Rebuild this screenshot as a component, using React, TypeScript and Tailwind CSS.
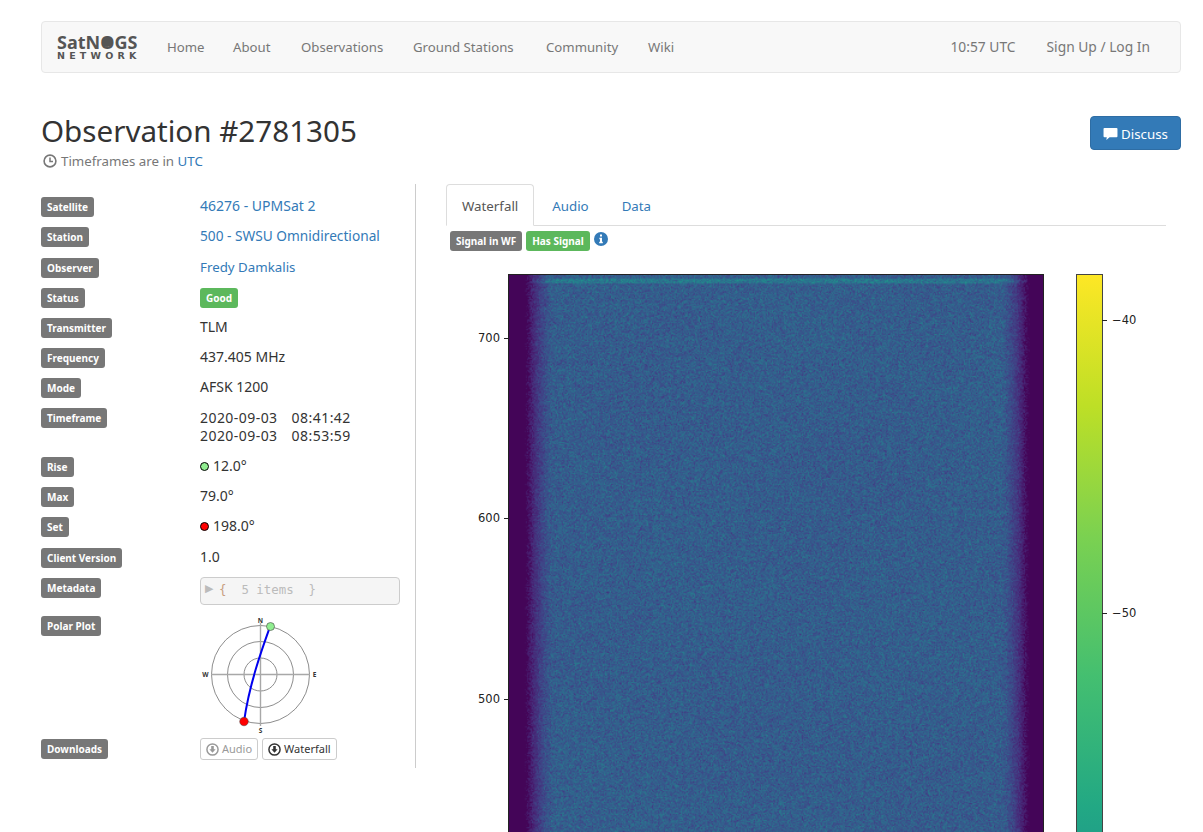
import { useEffect, useRef } from "react";

const font = { fontFamily: '"Noto Sans", sans-serif' };
const plotFont = { fontFamily: '"DejaVu Sans", sans-serif' };

const VIRIDIS: [number, number, number][] = [
  [68, 1, 84], [72, 35, 116], [64, 67, 135], [52, 94, 141], [41, 120, 142],
  [32, 144, 140], [34, 167, 132], [68, 190, 112], [121, 209, 81], [189, 222, 38], [253, 231, 36],
];

function viridis(t: number): [number, number, number] {
  const x = Math.max(0, Math.min(0.9999, t)) * 10;
  const i = Math.floor(x);
  const f = x - i;
  const a = VIRIDIS[i];
  const b = VIRIDIS[i + 1];
  return [a[0] + (b[0] - a[0]) * f, a[1] + (b[1] - a[1]) * f, a[2] + (b[2] - a[2]) * f];
}

function Waterfall() {
  const ref = useRef<HTMLCanvasElement>(null);
  useEffect(() => {
    const c = ref.current;
    if (!c) return;
    const ctx = c.getContext("2d");
    if (!ctx) return;
    const w = c.width;
    const h = c.height;
    const img = ctx.createImageData(w, h);
    let seed = 12345;
    const rnd = () => {
      seed = (seed * 1664525 + 1013904223) >>> 0;
      return seed / 4294967296;
    };
    for (let y = 0; y < h; y++) {
      for (let x = 0; x < w; x++) {
        const edge = Math.min(x, w - 1 - x + 2) + (rnd() - 0.5) * 6;
        const ramp = Math.max(0, Math.min(1, (edge - 15) / 20));
        const base = 0.012 + Math.pow(ramp, 0.7) * 0.285;
        const top = y > 2 && y < 7 && edge > 12 ? 0.1 * ramp : 0;
        const blotch = (Math.sin(x * 0.031 + y * 0.013) + Math.sin(x * 0.011 - y * 0.027)) * 0.003 * ramp;
        const n = (rnd() + rnd() + rnd() - 1.5) * 0.1 * ramp;
        const v = viridis(base + top + blotch + n);
        const p = (y * w + x) * 4;
        img.data[p] = v[0];
        img.data[p + 1] = v[1];
        img.data[p + 2] = v[2];
        img.data[p + 3] = 255;
      }
    }
    ctx.putImageData(img, 0, 0);
  }, []);
  return <canvas ref={ref} width={445} height={500} className="block h-[600px] w-[534px]" />;
}

function Label({ children }: { children: string }) {
  return (
    <span className="inline-block h-5 whitespace-nowrap rounded-[3px] bg-[#777777] px-[6px] text-[10px] font-bold leading-5 text-white">
      {children}
    </span>
  );
}

function Row({ label, h, children }: { label: string; h: string; children: React.ReactNode }) {
  return (
    <div className={`flex ${h}`}>
      <div className="w-[159px] shrink-0 pt-[1px] leading-none">
        <Label>{label}</Label>
      </div>
      <div className="text-[14px] leading-5 text-[#333333]">{children}</div>
    </div>
  );
}

function A({ children }: { children: string }) {
  return <span className="text-[#337ab7]">{children}</span>;
}

function DownloadIcon({ className }: { className: string }) {
  return (
    <svg viewBox="0 0 14 14" className={className}>
      <circle cx="7" cy="7" r="6" fill="none" stroke="currentColor" strokeWidth="1.6" />
      <path d="M5.6 3.2h2.8v3.4h2L7 10.6 3.6 6.6h2z" fill="currentColor" />
    </svg>
  );
}

function Polar() {
  return (
    <svg width="130" height="118" viewBox="0 0 130 118" className="block" style={font}>
      <g fill="none" stroke="#808080" strokeWidth="0.9">
        <circle cx="60.5" cy="59.5" r="49" />
        <circle cx="60.5" cy="59.5" r="33" />
        <circle cx="60.5" cy="59.5" r="16.5" />
      </g>
      <path d="M60.5 8v103M11 59.5h99" stroke="#a8a8a8" strokeWidth="1.4" />
      <path d="M70 11.7C62 34 49 70 44 106.7" fill="none" stroke="#0000ee" strokeWidth="2" />
      <circle cx="70.5" cy="11.5" r="4" fill="#90ee90" stroke="#444" strokeWidth="0.6" />
      <circle cx="44" cy="106.5" r="4.3" fill="#ff0000" stroke="#444" strokeWidth="0.5" />
      <g fontSize="6.5" fontWeight="700" fill="#333" textAnchor="middle">
        <text x="60.5" y="7.5">N</text>
        <text x="60.5" y="117.5">S</text>
        <text x="5.5" y="62">W</text>
        <text x="114.5" y="62">E</text>
      </g>
    </svg>
  );
}

function Tick({ y, label }: { y: number; label: string }) {
  return (
    <div className="absolute left-[-31px] flex items-center text-[11.5px] leading-none text-[#222222]" style={{ ...plotFont, top: y - 6 }}>
      <span className="w-[23px]">{label}</span>
      <span className="ml-[3px] h-px w-[5px] bg-[#222222]" />
    </div>
  );
}

function CTick({ y, label }: { y: number; label: string }) {
  return (
    <div className="absolute left-[25px] flex items-center text-[11.5px] leading-none text-[#222222]" style={{ ...plotFont, top: y - 6 }}>
      <span className="h-px w-[5px] bg-[#222222]" />
      <span className="ml-[5px]">{label}</span>
    </div>
  );
}

export default function App() {
  return (
    <div className="h-[832px] overflow-hidden bg-white text-[#333333]" style={font}>
      <div className="ml-[41px] w-[1140px] pt-[21px]">
        <nav className="flex h-[52px] items-center rounded border border-[#e7e7e7] bg-[#f8f8f8] pl-[15px] pr-[30px] text-[13.2px] text-[#777777]">
          <div className="flex w-[96px] flex-col text-[#555555]">
            <span className="whitespace-nowrap text-[18px] font-bold leading-[15px]">
              SatN
              <span className="relative inline-block">
                O
                <span className="absolute left-[2px] top-[2px] h-[10px] w-[10px] rounded-full bg-[#555555]" />
              </span>
              GS
            </span>
            <span className="mt-[2px] whitespace-nowrap text-[9.5px] font-bold leading-[8px] tracking-[4.2px]" style={plotFont}>NETWORK</span>
          </div>
          <div className="flex gap-[30px] whitespace-nowrap pl-[14px] pt-[2px]">
            <span className="w-[36px]">Home</span>
            <span className="w-[38px]">About</span>
            <span className="w-[82px]">Observations</span>
            <span className="w-[103px]">Ground Stations</span>
            <span className="w-[72px]">Community</span>
            <span>Wiki</span>
          </div>
          <div className="ml-auto flex gap-[31px] pt-[1px] text-[13.8px]">
            <span>10:57 UTC</span>
            <span>Sign Up / Log In</span>
          </div>
        </nav>

        <div className="mt-[40px] flex items-start justify-between">
          <div>
            <h1 className="text-[29.6px] font-normal leading-[36px] text-[#333333]">Observation #2781305</h1>
            <div className="ml-[2px] mt-[2px] flex items-center gap-[4px] text-[13.3px] leading-5 text-[#777777]">
              <svg viewBox="0 0 14 14" className="h-[14px] w-[14px]">
                <circle cx="7" cy="7" r="5.9" fill="none" stroke="currentColor" strokeWidth="1.6" />
                <path d="M7 3.6V7.4H10" fill="none" stroke="currentColor" strokeWidth="1.5" />
              </svg>
              <span>
                Timeframes are in <A>UTC</A>
              </span>
            </div>
          </div>
          <div className="mt-[3px] flex h-[34px] w-[91px] items-center justify-center gap-[3px] rounded border border-[#2e6da4] bg-[#337ab7] pt-[3px] text-[13.3px] text-white">
            <svg viewBox="0 0 16 14" className="mb-[2px] h-[13px] w-[15px]">
              <path d="M1.5 1h13a1 1 0 0 1 1 1v8a1 1 0 0 1-1 1H7l-3.5 3 .5-3H1.5a1 1 0 0 1-1-1V2a1 1 0 0 1 1-1z" fill="currentColor" />
            </svg>
            <span>Discuss</span>
          </div>
        </div>

        <div className="mt-[13px] flex">
          <div className="h-[584px] w-[375px] shrink-0 border-r border-[#cccccc] pt-[12px]">
            <Row label="Satellite" h="h-[30px]"><A>46276 - UPMSat 2</A></Row>
            <Row label="Station" h="h-[31px]"><span className="text-[13.7px]"><A>500 - SWSU Omnidirectional</A></span></Row>
            <Row label="Observer" h="h-[30px]"><span className="text-[13.3px]"><A>Fredy Damkalis</A></span></Row>
            <Row label="Status" h="h-[30px]">
              <span className="mt-[1px] inline-block h-5 rounded-[3px] bg-[#5cb85c] px-[6px] align-top text-[10px] font-bold leading-5 text-white">Good</span>
            </Row>
            <Row label="Transmitter" h="h-[30px]">TLM</Row>
            <Row label="Frequency" h="h-[30px]">437.405 MHz</Row>
            <Row label="Mode" h="h-[30px]">AFSK 1200</Row>
            <Row label="Timeframe" h="h-[49px]">
              <div className="pt-[2px] leading-[18px] tracking-[0.45px]">
                <div className="flex gap-[14px]"><span>2020-09-03</span><span>08:41:42</span></div>
                <div className="flex gap-[14px]"><span>2020-09-03</span><span>08:53:59</span></div>
              </div>
            </Row>
            <Row label="Rise" h="h-[30px]">
              <span className="flex items-center gap-[4px]">
                <span className="h-[9px] w-[9px] rounded-full border border-black bg-[#90ee90]" />12.0°
              </span>
            </Row>
            <Row label="Max" h="h-[30px]">79.0°</Row>
            <Row label="Set" h="h-[31px]">
              <span className="flex items-center gap-[4px]">
                <span className="h-[9px] w-[9px] rounded-full border border-black bg-[#ff0000]" />198.0°
              </span>
            </Row>
            <Row label="Client Version" h="h-[30px]">1.0</Row>
            <Row label="Metadata" h="h-[38px]">
              <div className="flex h-[28px] w-[200px] gap-[6px] rounded border border-[#cccccc] bg-[#f5f5f5] pl-[4px] pt-[2px] text-[#bbbbbb]">
                <span className="text-[11px] leading-[16px] text-[#bbbbbb]">▶</span>
                <span className="whitespace-pre text-[12.4px] leading-[20px]" style={{ fontFamily: '"DejaVu Sans Mono", monospace' }}>
                  <span className="text-[#c8a080]">{"{"}</span>{"  5 items  }"}
                </span>
              </div>
            </Row>
            <Row label="Polar Plot" h="h-[123px]">
              <Polar />
            </Row>
            <Row label="Downloads" h="h-[24px]">
              <div className="flex gap-[4px] text-[11px] leading-[20px]">
                <span className="flex h-[22px] items-center gap-[3px] rounded-[3px] border border-[#cccccc] px-[5px] text-[#999999]">
                  <DownloadIcon className="h-[13px] w-[13px]" />Audio
                </span>
                <span className="flex h-[22px] items-center gap-[3px] rounded-[3px] border border-[#cccccc] px-[5px] text-[#333333]">
                  <DownloadIcon className="h-[13px] w-[13px]" />Waterfall
                </span>
              </div>
            </Row>
          </div>

          <div className="min-w-0 flex-1 pl-[30px] pr-[15px]">
            <div className="flex h-[42px] border-b border-[#dddddd] text-[13.3px]">
              <div className="flex h-[42px] items-center rounded-t border border-[#dddddd] border-b-white bg-white px-[15px] pt-[3px] text-[#555555]">Waterfall</div>
              <div className="flex h-[42px] items-center pl-[18px] pr-[17px] pt-[3px] text-[#337ab7]">Audio</div>
              <div className="flex h-[42px] items-center px-[16px] pt-[3px] text-[#337ab7]">Data</div>
            </div>
            <div className="mt-[5px] flex items-start gap-[4px] pl-[4px]">
              <Label>Signal in WF</Label>
              <span className="inline-block h-5 rounded-[3px] bg-[#5cb85c] px-[6px] text-[10px] font-bold leading-5 text-white">Has Signal</span>
              <svg viewBox="0 0 14 14" className="mt-[1px] h-[14px] w-[14px]">
                <circle cx="7" cy="7" r="7" fill="#337ab7" />
                <path d="M6 2.6h2v2H6zM5.4 5.8H8v4h.8v1.4H5.2V9.8H6V7.2h-.6z" fill="#fff" />
              </svg>
            </div>

            <div className="relative ml-[62px] mt-[23px] flex items-start">
              <div className="relative border border-[#222222]">
                <Waterfall />
                <Tick y={64} label="700" />
                <Tick y={244} label="600" />
                <Tick y={425} label="500" />
              </div>
              <div className="relative ml-[32px] h-[600px] w-[27px] border border-[#444444] bg-[linear-gradient(to_bottom,#fde725_0%,#bddf26_22%,#7ad151_44%,#44bf70_67%,#22a884_89%,#1f978b_100%)]">
                <CTick y={46} label="−40" />
                <CTick y={339} label="−50" />
              </div>
            </div>
          </div>
        </div>
      </div>
    </div>
  );
}
